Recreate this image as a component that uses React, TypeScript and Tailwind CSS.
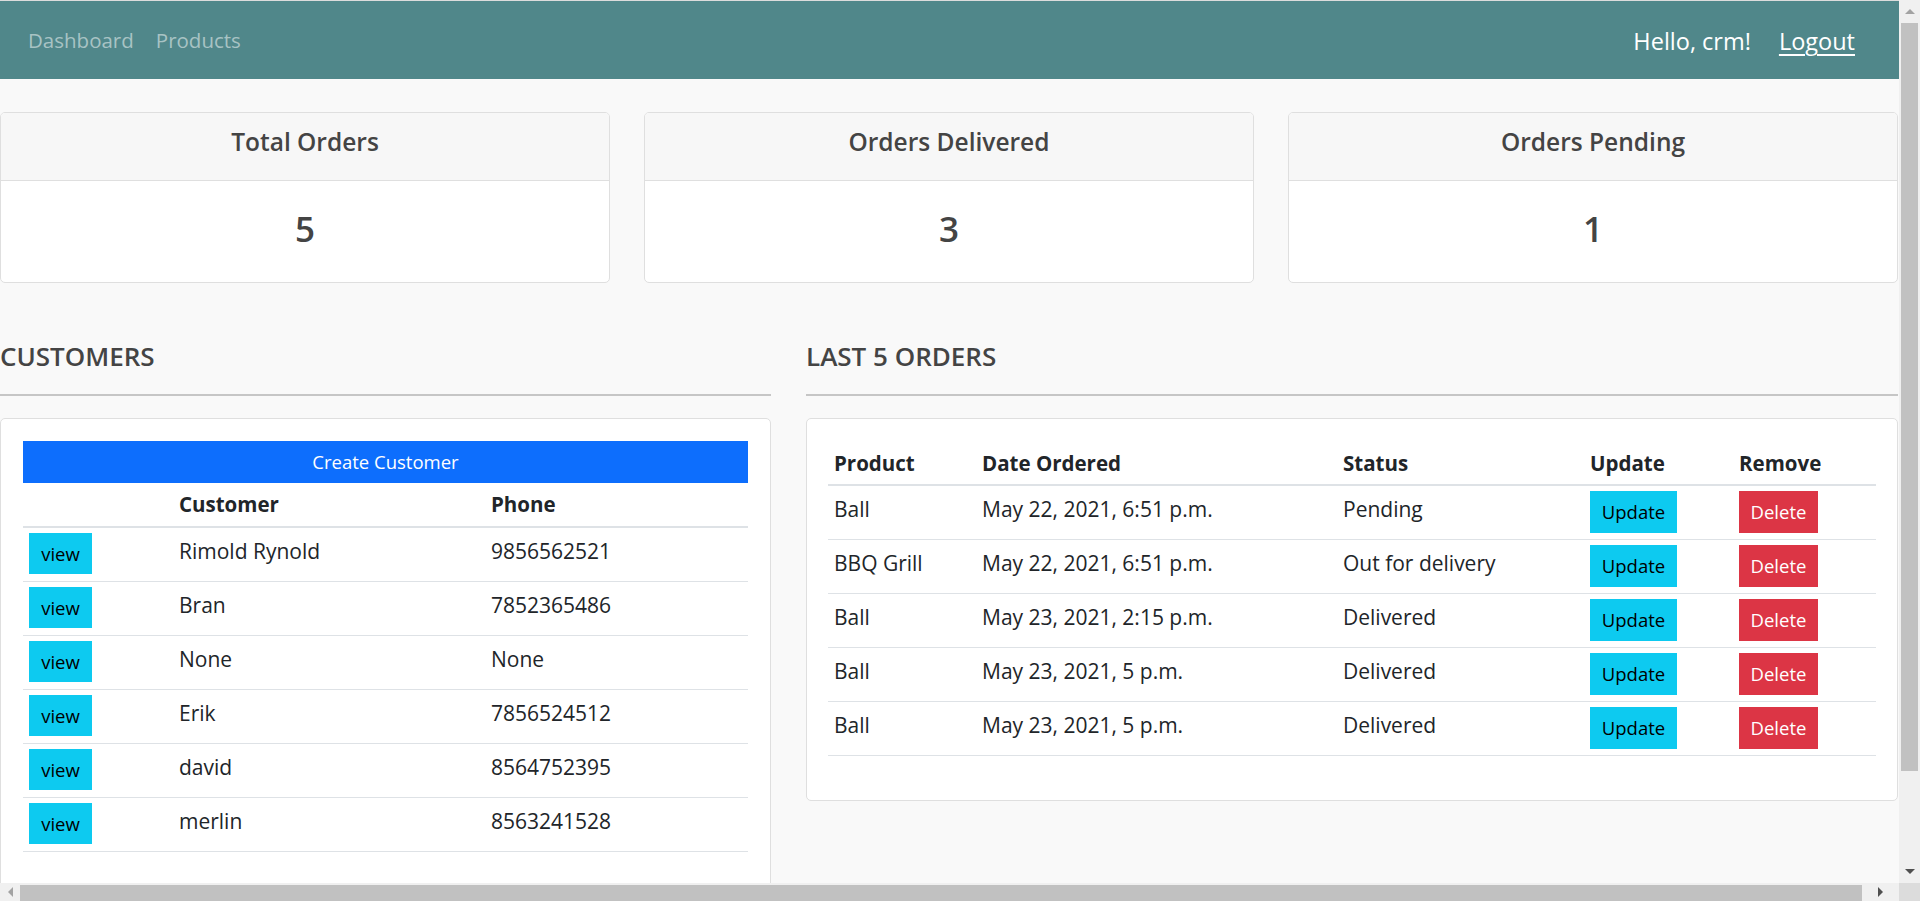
import React from "react";

const font = { fontFamily: '"Open Sans", "Noto Sans", sans-serif' };

function Stat({ title, value }: { title: string; value: string }) {
  return (
    <div className="flex flex-col border border-[#dfdfdf] rounded-[5px] bg-white overflow-hidden">
      <div className="h-[68px] flex items-center justify-center bg-[#f7f7f7] border-b border-[#dfdfdf] text-[24.5px] font-semibold text-[#444] pb-[9px]">
        {title}
      </div>
      <div className="h-[101px] flex items-center justify-center text-[35px] font-semibold text-[#444] pb-[4px]">
        {value}
      </div>
    </div>
  );
}

const customers = [
  ["Rimold Rynold", "9856562521"],
  ["Bran", "7852365486"],
  ["None", "None"],
  ["Erik", "7856524512"],
  ["david", "8564752395"],
  ["merlin", "8563241528"],
];

const orders = [
  ["Ball", "May 22, 2021, 6:51 p.m.", "Pending"],
  ["BBQ Grill", "May 22, 2021, 6:51 p.m.", "Out for delivery"],
  ["Ball", "May 23, 2021, 2:15 p.m.", "Delivered"],
  ["Ball", "May 23, 2021, 5 p.m.", "Delivered"],
  ["Ball", "May 23, 2021, 5 p.m.", "Delivered"],
];

export default function App() {
  return (
    <div className="w-[1920px] h-[901px] flex flex-col overflow-hidden bg-[#f0f0f0]" style={font}>
      <div className="flex h-[883px]">
        <div className="w-[1899px] h-[883px] overflow-hidden bg-[#f9f9f9] border-t border-[#dcdcdc]">
          <nav className="h-[78px] bg-[#50878a] flex items-center justify-between pl-[28px] pr-[44px]">
            <div className="flex gap-[22px] text-[20.5px] text-[#a8c3c4] mt-[1px]">
              <span>Dashboard</span>
              <span>Products</span>
            </div>
            <div className="flex items-center gap-[28px] text-[23.5px] text-white mt-[4px]">
              <span>Hello, crm!</span>
              <span className="underline underline-offset-[4px] decoration-[2px]">Logout</span>
            </div>
          </nav>

          <div className="grid grid-cols-3 gap-[34px] mt-[33px] pr-[1px]">
            <Stat title="Total Orders" value="5" />
            <Stat title="Orders Delivered" value="3" />
            <Stat title="Orders Pending" value="1" />
          </div>

          <div className="flex gap-[35px] mt-[42px] pr-[1px]">
            <div className="w-[771px] shrink-0">
              <div className="h-[63px] flex items-center text-[26px] font-semibold text-[#444]">CUSTOMERS</div>
              <div className="h-[2px] bg-[#c6c6c6] mt-[6px]" />
              <div className="mt-[22px] bg-white border border-[#dfdfdf] rounded-[5px] px-[22px] pt-[22px] pb-[60px]">
                <div className="h-[42px] bg-[#0d6efd] text-white text-[18.5px] flex items-center justify-center">
                  Create Customer
                </div>
                <div className="grid grid-cols-[150px_312px_1fr] h-[45px] border-b-[2px] border-[#dee2e6] text-[20.5px] font-bold text-[#212529]">
                  <div />
                  <div className="px-[6px] pt-[6px]">Customer</div>
                  <div className="px-[6px] pt-[6px]">Phone</div>
                </div>
                {customers.map((c, i) => (
                  <div key={i} className="grid grid-cols-[150px_312px_1fr] h-[54px] border-b border-[#dee2e6] text-[21px] text-[#212529]">
                    <div className="px-[6px] pt-[5px]">
                      <div className="w-[63px] h-[41px] bg-[#0dcaf0] text-black text-[18.5px] flex items-center justify-center">view</div>
                    </div>
                    <div className="px-[6px] pt-[8px]">{c[0]}</div>
                    <div className="px-[6px] pt-[8px]">{c[1]}</div>
                  </div>
                ))}
              </div>
            </div>

            <div className="flex-1">
              <div className="h-[63px] flex items-center text-[26px] font-semibold text-[#444]">LAST 5 ORDERS</div>
              <div className="h-[2px] bg-[#c6c6c6] mt-[6px]" />
              <div className="mt-[22px] bg-white border border-[#dfdfdf] rounded-[5px] px-[21px] pt-[24px] pb-[44px]">
                <div className="grid grid-cols-[148px_361px_247px_149px_1fr] h-[43px] border-b-[2px] border-[#dee2e6] text-[20.5px] font-bold text-[#212529]">
                  <div className="px-[6px] pt-[5px]">Product</div>
                  <div className="px-[6px] pt-[5px]">Date Ordered</div>
                  <div className="px-[6px] pt-[5px]">Status</div>
                  <div className="px-[6px] pt-[5px]">Update</div>
                  <div className="px-[6px] pt-[5px]">Remove</div>
                </div>
                {orders.map((o, i) => (
                  <div key={i} className="grid grid-cols-[148px_361px_247px_149px_1fr] h-[54px] border-b border-[#dee2e6] text-[21px] text-[#212529]">
                    <div className="px-[6px] pt-[8px]">{o[0]}</div>
                    <div className="px-[6px] pt-[8px]">{o[1]}</div>
                    <div className="px-[6px] pt-[8px]">{o[2]}</div>
                    <div className="px-[6px] pt-[5px]">
                      <div className="w-[87px] h-[42px] bg-[#0dcaf0] text-black text-[18.5px] flex items-center justify-center">Update</div>
                    </div>
                    <div className="px-[6px] pt-[5px]">
                      <div className="w-[79px] h-[42px] bg-[#dc3545] text-white text-[18.5px] flex items-center justify-center">Delete</div>
                    </div>
                  </div>
                ))}
              </div>
            </div>
          </div>
        </div>
        {/* vertical scrollbar */}
        <div className="w-[21px] h-[883px] bg-[#f0f0f0] flex flex-col items-center">
          <div className="h-[23px] flex items-center justify-center">
            <div className="w-0 h-0 border-l-[5px] border-r-[5px] border-b-[5px] border-l-transparent border-r-transparent border-b-[#a3a3a3]" />
          </div>
          <div className="w-[17px] h-[748px] bg-[#c1c1c1]" />
          <div className="flex-1" />
          <div className="h-[23px] flex items-center justify-center">
            <div className="w-0 h-0 border-l-[5px] border-r-[5px] border-t-[5px] border-l-transparent border-r-transparent border-t-[#505050]" />
          </div>
        </div>
      </div>
      {/* horizontal scrollbar */}
      <div className="h-[18px] flex bg-[#f0f0f0]">
        <div className="w-[1899px] flex items-center">
          <div className="w-[20px] flex items-center justify-center">
            <div className="w-0 h-0 border-t-[5px] border-b-[5px] border-r-[5px] border-t-transparent border-b-transparent border-r-[#a3a3a3]" />
          </div>
          <div className="w-[1842px] h-[16px] mt-[2px] bg-[#c1c1c1]" />
          <div className="flex-1 flex items-center justify-center">
            <div className="w-0 h-0 border-t-[5px] border-b-[5px] border-l-[5px] border-t-transparent border-b-transparent border-l-[#505050]" />
          </div>
        </div>
        <div className="w-[21px] bg-[#dcdcdc]" />
      </div>
    </div>
  );
}
